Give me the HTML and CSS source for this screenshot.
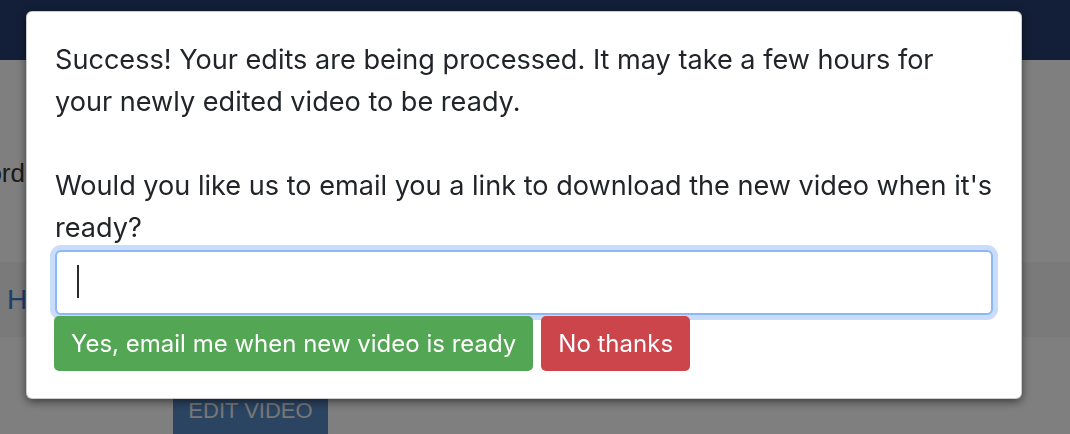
FILE: index.html
```html
<!DOCTYPE html>
<html lang="en">
<head>
<meta charset="utf-8">
<title>Edit video</title>
<link rel="stylesheet" href="styles.css">
</head>
<body>
<div class="page">
  <header class="navbar"></header>
  <main class="content">
    <div class="field-row"><span class="field-label">Record</span></div>
    <nav class="tabs"><a class="tab" href="#">Home</a></nav>
    <div class="actions"><button class="btn-edit" type="button">EDIT VIDEO</button></div>
  </main>
</div>
<div class="backdrop"></div>
<div class="modal" role="dialog">
  <p class="message">Success! Your edits are being processed. It may take a few hours for your newly edited video to be ready.<br><br>Would you like us to email you a link to download the new video when it's ready?</p>
  <div class="input-wrap">
    <input class="email-input is-focused" type="email">
    <span class="caret"></span>
  </div>
  <div class="modal-buttons">
    <button class="btn btn-yes" type="button">Yes, email me when new video is ready</button>
    <button class="btn btn-no" type="button">No thanks</button>
  </div>
</div>
</body>
</html>
```
FILE: styles.css
```css
* { box-sizing: border-box; }
html, body { margin: 0; padding: 0; }
body {
  width: 1070px;
  height: 434px;
  overflow: hidden;
  background: #ffffff;
  font-family: Inter, "Noto Sans", sans-serif;
  color: #212529;
}
.page { display: flex; flex-direction: column; height: 434px; }
.navbar { height: 60px; flex: none; background: #263e70; }
.content { display: flex; flex-direction: column; }
.field-row {
  height: 202px;
  width: 25px;
  display: flex;
  justify-content: flex-end;
  align-items: flex-start;
  padding-top: 98px;
}
.field-label {
  flex: none;
  white-space: nowrap;
  font-family: "Liberation Sans", Arial, sans-serif;
  font-size: 26px;
  color: #363636;
}
.tabs {
  height: 75px;
  background: #f4f4f4;
  display: flex;
  align-items: center;
  padding-left: 7px;
}
.tab {
  font-family: "Liberation Sans", Arial, sans-serif;
  font-size: 28px;
  color: #3e7ecc;
  text-decoration: none;
}
.actions { padding: 56px 0 0 173px; }
.btn-edit {
  width: 155px;
  height: 60px;
  border: 0;
  border-radius: 5px;
  background: #5688c4;
  color: #eeeeee;
  font-family: "Liberation Sans", Arial, sans-serif;
  font-size: 22px;
  padding: 5px 0 0;
  display: flex;
  align-items: flex-start;
  justify-content: center;
}
.backdrop {
  position: fixed;
  inset: 0;
  background: rgba(0, 0, 0, 0.5);
}
.modal {
  position: absolute;
  left: 26px;
  top: 11px;
  width: 996px;
  height: 388px;
  background: #fff;
  border: 1px solid rgba(0, 0, 0, 0.2);
  border-radius: 6px;
  box-shadow: 0 3px 9px rgba(0, 0, 0, 0.5);
  padding: 27px 28px 26px;
  display: flex;
  flex-direction: column;
}
.message {
  margin: 0;
  font-size: 27.1px;
  line-height: 42px;
  color: #212529;
}
.input-wrap { position: relative; margin-top: 1px; }
.email-input {
  display: block;
  width: 100%;
  height: 65px;
  border: 2px solid #8ab8f8;
  border-radius: 6px;
  padding: 0 20px;
  font-family: Inter, "Noto Sans", sans-serif;
  font-size: 26px;
  color: #212529;
  outline: none;
  box-shadow: 0 0 0 5px #cadcfc;
}
.caret {
  position: absolute;
  left: 22px;
  top: 15px;
  width: 2px;
  height: 33px;
  background: #2a2a2a;
}
.modal-buttons { position: relative; display: flex; gap: 8px; margin: 1px 0 0 -1px; }
.btn {
  height: 55px;
  border: 0;
  border-radius: 5px;
  padding: 0 17px;
  font-family: Inter, "Noto Sans", sans-serif;
  font-size: 24px;
  color: #fff;
}
.btn-yes { background: #53a653; }
.btn-no { background: #cc454b; }
```
